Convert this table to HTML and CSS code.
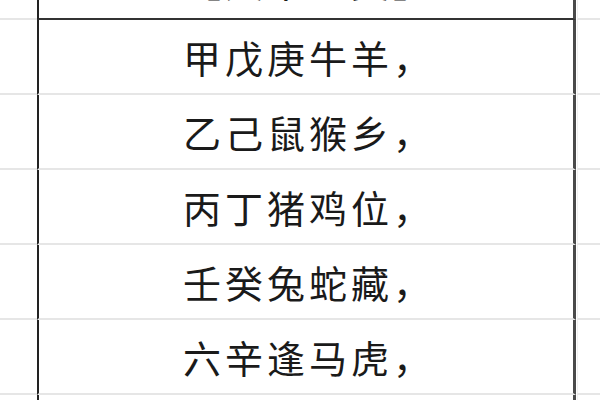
FILE: index.html
```html
<!DOCTYPE html>
<html lang="zh-CN">
<head>
<meta charset="utf-8">
<link rel="stylesheet" href="styles.css">
</head>
<body>
<div class="sheet">
  <div class="row head">
    <div class="side left"></div>
    <div class="cell"><span class="head-text">【天干地支】</span></div>
    <div class="side right"></div>
  </div>
  <div class="row">
    <div class="side left"></div>
    <div class="cell">甲戊庚牛羊，</div>
    <div class="side right"></div>
  </div>
  <div class="row">
    <div class="side left"></div>
    <div class="cell">乙己鼠猴乡，</div>
    <div class="side right"></div>
  </div>
  <div class="row">
    <div class="side left"></div>
    <div class="cell">丙丁猪鸡位，</div>
    <div class="side right"></div>
  </div>
  <div class="row">
    <div class="side left"></div>
    <div class="cell">壬癸兔蛇藏，</div>
    <div class="side right"></div>
  </div>
  <div class="row">
    <div class="side left"></div>
    <div class="cell">六辛逢马虎，</div>
    <div class="side right"></div>
  </div>
  <div class="row">
    <div class="side left"></div>
    <div class="cell"></div>
    <div class="side right"></div>
  </div>
</div>
</body>
</html>
```

FILE: styles.css
```css
html, body {
  margin: 0;
  padding: 0;
  background: #ffffff;
  overflow: hidden;
}
.sheet {
  width: 600px;
  height: 400px;
  overflow: hidden;
  display: flex;
  flex-direction: column;
  font-family: "Noto Sans CJK SC", "Noto Sans", sans-serif;
  color: #1a1a1a;
}
.row {
  display: flex;
  height: 75px;
  flex: none;
}
.side {
  box-sizing: border-box;
  height: 100%;
  border-bottom: 2px solid #e6e6e6;
}
.left {
  width: 37px;
}
.right {
  flex: 1;
  border-left: 1px solid #f0f0f0;
  margin-left: 1px;
}
.cell {
  box-sizing: border-box;
  width: 539px;
  height: 100%;
  border-left: 2px solid #222222;
  border-right: 3px solid #4a4a4a;
  border-bottom: 2px solid #e6e6e6;
  display: flex;
  align-items: center;
  justify-content: center;
  font-size: 38px;
  letter-spacing: 4px;
  line-height: 1;
  padding-left: 6px;
}
.head {
  height: 20px;
}
.head .cell {
  border-bottom: 2px solid #333333;
  align-items: flex-end;
  overflow: hidden;
}
.head-text {
  display: block;
  margin-bottom: 18px;
  line-height: 1;
}
```
